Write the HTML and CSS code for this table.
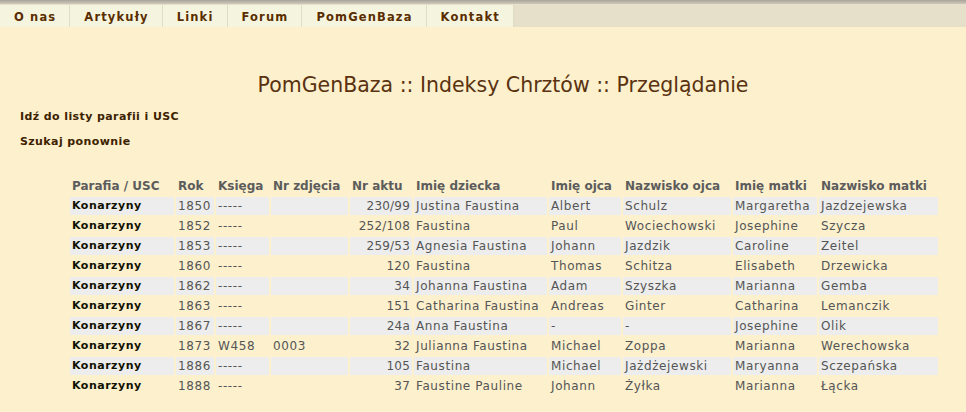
FILE: index.html
```html
<!DOCTYPE html>
<html lang="pl">
<head>
<meta charset="utf-8">
<title>PomGenBaza</title>
<link rel="stylesheet" href="styles.css">
</head>
<body>
<div class="topline"></div>
<nav class="nav">
  <a class="tab" href="#">O nas</a>
  <a class="tab" href="#">Artykuły</a>
  <a class="tab" href="#">Linki</a>
  <a class="tab" href="#">Forum</a>
  <a class="tab" href="#">PomGenBaza</a>
  <a class="tab" href="#">Kontakt</a>
</nav>
<main class="content">
  <h1 class="title">PomGenBaza :: Indeksy Chrztów :: Przeglądanie</h1>
  <p class="link"><a href="#">Idź do listy parafii i USC</a></p>
  <p class="link"><a href="#">Szukaj ponownie</a></p>
  <table class="results">
    <thead>
      <tr><th class="c1">Parafia / USC</th><th class="c2">Rok</th><th class="c3">Księga</th><th class="c4">Nr zdjęcia</th><th class="c5">Nr aktu</th><th class="c6">Imię dziecka</th><th class="c7">Imię ojca</th><th class="c8">Nazwisko ojca</th><th class="c9">Imię matki</th><th class="c10">Nazwisko matki</th></tr>
    </thead>
    <tbody>
      <tr class="odd"><td class="par">Konarzyny</td><td>1850</td><td>-----</td><td></td><td class="num">230/99</td><td>Justina Faustina</td><td>Albert</td><td>Schulz</td><td>Margaretha</td><td>Jazdzejewska</td></tr>
      <tr><td class="par">Konarzyny</td><td>1852</td><td>-----</td><td></td><td class="num">252/108</td><td>Faustina</td><td>Paul</td><td>Wociechowski</td><td>Josephine</td><td>Szycza</td></tr>
      <tr class="odd"><td class="par">Konarzyny</td><td>1853</td><td>-----</td><td></td><td class="num">259/53</td><td>Agnesia Faustina</td><td>Johann</td><td>Jazdzik</td><td>Caroline</td><td>Zeitel</td></tr>
      <tr><td class="par">Konarzyny</td><td>1860</td><td>-----</td><td></td><td class="num">120</td><td>Faustina</td><td>Thomas</td><td>Schitza</td><td>Elisabeth</td><td>Drzewicka</td></tr>
      <tr class="odd"><td class="par">Konarzyny</td><td>1862</td><td>-----</td><td></td><td class="num">34</td><td>Johanna Faustina</td><td>Adam</td><td>Szyszka</td><td>Marianna</td><td>Gemba</td></tr>
      <tr><td class="par">Konarzyny</td><td>1863</td><td>-----</td><td></td><td class="num">151</td><td>Catharina Faustina</td><td>Andreas</td><td>Ginter</td><td>Catharina</td><td>Lemanczik</td></tr>
      <tr class="odd"><td class="par">Konarzyny</td><td>1867</td><td>-----</td><td></td><td class="num">24a</td><td>Anna Faustina</td><td>-</td><td>-</td><td>Josephine</td><td>Olik</td></tr>
      <tr><td class="par">Konarzyny</td><td>1873</td><td>W458</td><td>0003</td><td class="num">32</td><td>Julianna Faustina</td><td>Michael</td><td>Zoppa</td><td>Marianna</td><td>Werechowska</td></tr>
      <tr class="odd"><td class="par">Konarzyny</td><td>1886</td><td>-----</td><td></td><td class="num">105</td><td>Faustina</td><td>Michael</td><td>Jażdżejewski</td><td>Maryanna</td><td>Sczepańska</td></tr>
      <tr><td class="par">Konarzyny</td><td>1888</td><td>-----</td><td></td><td class="num">37</td><td>Faustine Pauline</td><td>Johann</td><td>Żyłka</td><td>Marianna</td><td>Łącka</td></tr>
    </tbody>
  </table>
</main>
</body>
</html>
```

FILE: styles.css
```css
html, body {
  margin: 0;
  padding: 0;
}
body {
  background: #fcf0cd;
  font-family: "DejaVu Sans", Verdana, sans-serif;
  font-size: 12px;
  color: #555555;
  width: 966px;
  height: 412px;
  overflow: hidden;
}
.topline {
  height: 4px;
  background: linear-gradient(#a8a49a, #cfcabb);
}
.nav {
  display: flex;
  background: #e6e0cb;
  padding-top: 1px;
  height: 22px;
}
.tab {
  display: flex;
  align-items: center;
  padding: 2px 13px 0 14px;
  background: #f5f5df;
  border-right: 1px solid #e0ddc6;
  font-weight: bold;
  font-size: 11.5px;
  letter-spacing: 1.15px;
  color: #5a2d00;
  text-decoration: none;
}
.content {
  padding: 0 20px;
}
.title {
  margin: 47px 0 0 40px;
  font-weight: normal;
  font-size: 20.5px;
  line-height: 22px;
  text-align: center;
  color: #5a3210;
}
.link {
  margin: 0;
  height: 25px;
  line-height: 25px;
  font-weight: bold;
  font-size: 11px;
  letter-spacing: 0.4px;
}
.link:first-of-type {
  margin-top: 8px;
}
.link a {
  color: #3d2200;
  text-decoration: none;
}
.results {
  width: 872px;
  margin: 21px 0 0 48px;
  table-layout: fixed;
  border-collapse: separate;
  border-spacing: 2px;
}
.results th, .results td {
  box-sizing: border-box;
  padding: 0 2px;
  height: 18px;
  line-height: 18px;
  white-space: nowrap;
  overflow: hidden;
  text-align: left;
}
.results td {
  letter-spacing: 0.6px;
}
.results th {
  font-weight: bold;
  color: #5c5c5c;
}
.results tr.odd td {
  background: #ededed;
}
.results td.par {
  font-weight: bold;
  font-size: 11px;
  letter-spacing: 0.5px;
  color: #111100;
}
.results td.num {
  text-align: right;
  letter-spacing: 0.2px;
}
.c1 { width: 104px; }
.c2 { width: 38px; }
.c3 { width: 53px; }
.c4 { width: 77px; }
.c5 { width: 62px; }
.c6 { width: 133px; }
.c7 { width: 72px; }
.c8 { width: 108px; }
.c9 { width: 84px; }
.c10 { width: 119px; }
```
